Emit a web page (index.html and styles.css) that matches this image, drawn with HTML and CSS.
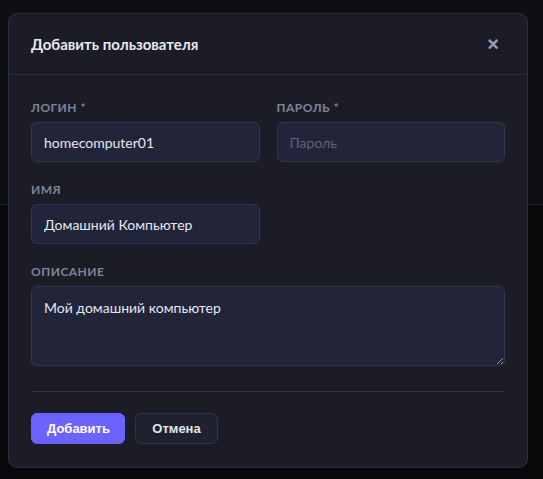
FILE: index.html
```html
<!DOCTYPE html>
<html lang="ru">
<head>
<meta charset="utf-8">
<title>Добавить пользователя</title>
<link rel="stylesheet" href="styles.css">
</head>
<body>
<div class="backdrop">
  <div class="bg-top"></div>
  <div class="bg-bottom"></div>
  <div class="overlay">
    <div class="modal">
      <div class="modal-header">
        <h2 class="modal-title">Добавить пользователя</h2>
        <span class="close">×</span>
      </div>
      <div class="modal-body">
        <div class="row">
          <div class="field">
            <label class="label">Логин *</label>
            <input class="input" type="text" value="homecomputer01">
          </div>
          <div class="field">
            <label class="label">Пароль *</label>
            <input class="input" type="password" placeholder="Пароль">
          </div>
        </div>
        <div class="row">
          <div class="field">
            <label class="label">Имя</label>
            <input class="input" type="text" value="Домашний Компьютер">
          </div>
          <div class="field"></div>
        </div>
        <div class="field">
          <label class="label">Описание</label>
          <textarea class="textarea">Мой домашний компьютер</textarea>
        </div>
        <div class="divider"></div>
        <div class="actions">
          <button class="btn btn-primary">Добавить</button>
          <button class="btn btn-secondary">Отмена</button>
        </div>
      </div>
    </div>
  </div>
</div>
</body>
</html>
```
FILE: styles.css
```css
* { box-sizing: border-box; }
html, body { margin: 0; padding: 0; }
body {
  width: 543px;
  height: 479px;
  overflow: hidden;
  background: #08090b;
  font-family: Lato, "Noto Sans", sans-serif;
}
.backdrop {
  position: relative;
  width: 543px;
  height: 479px;
  display: flex;
  flex-direction: column;
}
.bg-top {
  height: 205px;
  background: #0e0f13;
  border-bottom: 1px solid #1e2027;
}
.bg-bottom {
  flex: 1;
  background: #08090b;
}
.overlay {
  position: absolute;
  inset: 0;
  padding: 13px 0 0 8px;
}
.modal {
  width: 520px;
  height: 455px;
  background: #1b1c26;
  border: 1px solid #2b2e3e;
  border-radius: 9px;
  display: flex;
  flex-direction: column;
}
.modal-header {
  height: 61px;
  padding: 0 22px;
  border-bottom: 1px solid #2b2e3e;
  display: flex;
  align-items: center;
  justify-content: space-between;
}
.modal-title {
  margin: 0;
  font-size: 15px;
  font-weight: 700;
  color: #e8e9f0;
}
.close {
  color: #9a9db3;
  font-size: 20px;
  font-weight: 700;
  line-height: 1;
  margin-right: 6px;
  font-family: "Liberation Sans", sans-serif;
}
.modal-body {
  padding: 25px 22px 0 22px;
  display: flex;
  flex-direction: column;
}
.row {
  display: flex;
  gap: 17px;
}
.row .field { flex: 1; }
.field {
  display: flex;
  flex-direction: column;
  margin-bottom: 20px;
}
.label {
  font-size: 12px;
  font-weight: 700;
  color: #80849a;
  text-transform: uppercase;
  letter-spacing: 0.5px;
  line-height: 16px;
  margin-bottom: 6px;
}
.input, .textarea {
  height: 40px;
  background: #222539;
  border: 1px solid #33364b;
  border-radius: 6px;
  color: #e6e7ef;
  font-family: Lato, "Noto Sans", sans-serif;
  font-size: 14px;
  padding: 0 12px;
  outline: none;
}
.input::placeholder { color: #5f637a; }
.textarea {
  height: 80px;
  padding: 10px 12px;
  resize: vertical;
  line-height: 22px;
}
.divider {
  height: 1px;
  background: #2e3142;
  margin-top: 5px;
}
.actions {
  display: flex;
  gap: 10px;
  margin-top: 21px;
}
.btn {
  height: 31px;
  border-radius: 6px;
  font-family: "Liberation Sans", Arial, sans-serif;
  font-size: 13px;
  font-weight: 700;
  padding: 0 15px;
  cursor: pointer;
}
.btn-primary {
  background: #6c63ff;
  color: #ffffff;
  border: 1px solid #6c63ff;
  width: 94px;
}
.btn-secondary {
  background: #1f2131;
  color: #e3e4ec;
  border: 1px solid #30334a;
  width: 83px;
}
```
